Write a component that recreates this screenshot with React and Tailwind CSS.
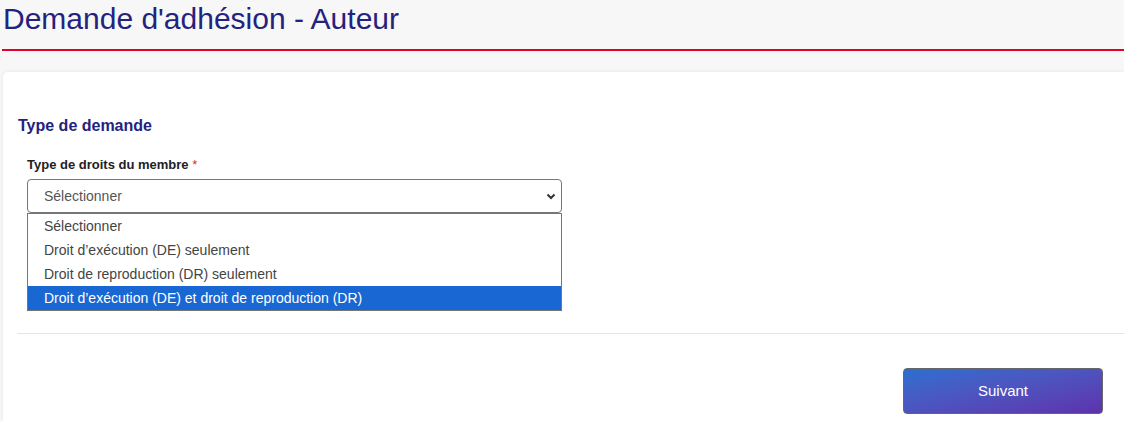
import React from 'react';

const options = [
  'Sélectionner',
  'Droit d’exécution (DE) seulement',
  'Droit de reproduction (DR) seulement',
  'Droit d’exécution (DE) et droit de reproduction (DR)',
];

export default function App() {
  return (
    <div className="h-[421px] flex flex-col bg-[#f7f7f7] overflow-hidden" style={{ fontFamily: '"Liberation Sans", Arial, sans-serif' }}>
      {/* Page header */}
      <div className="pl-[3px] pt-[1px]">
        <h1 className="text-[30px] leading-[36px] text-[#23237e]">Demande d'adhésion - Auteur</h1>
      </div>
      <div className="ml-[2px] mt-[12px] h-[2px] bg-[#e4002b]" />

      {/* Card */}
      <div className="flex-1 ml-[3px] mt-[21px] bg-white rounded-tl-[5px] shadow-[0_0_4px_rgba(0,0,0,0.08)] pl-[14px] pt-[44px]">
        <h2 className="ml-[1px] text-[16px] leading-[20px] font-bold text-[#23237e]">Type de demande</h2>

        <div className="ml-[10px] mt-[21px]">
          <label className="block text-[13px] leading-[16px] font-bold text-[#222]">
            Type de droits du membre <span className="text-[#c0392b] font-normal">*</span>
          </label>
          <div className="relative mt-[6px] w-[535px]">
            <div className="h-[34px] flex items-center justify-between border border-[#767676] rounded-[4px] pl-[16px] pr-[5px] text-[14px] text-[#555]">
              <span>Sélectionner</span>
              <svg width="10" height="10" viewBox="0 0 10 10" className="text-[#333]">
                <path d="M1.5 3.5 L5 7 L8.5 3.5" fill="none" stroke="currentColor" strokeWidth="2" />
              </svg>
            </div>
            {/* Open option list */}
            <ul className="absolute left-0 top-[34px] w-[535px] bg-white border border-[#767676] text-[14px] text-[#444]">
              {options.map((o, i) => (
                <li
                  key={o}
                  className={
                    i === 3
                      ? 'h-[24px] leading-[24px] pl-[16px] bg-[#1967d2] text-white'
                      : 'h-[24px] leading-[24px] pl-[16px]'
                  }
                >
                  {o}
                </li>
              ))}
            </ul>
          </div>
        </div>

        <div className="mt-[120px] h-px bg-[#e5e5e5]" />

        <div className="flex justify-end pr-[21px] mt-[34px]">
          <button className="w-[200px] h-[46px] rounded-[4px] border border-[#666] bg-gradient-to-br from-[#2a6fd0] to-[#5d31ad] text-white text-[15px]">
            Suivant
          </button>
        </div>
      </div>
    </div>
  );
}
